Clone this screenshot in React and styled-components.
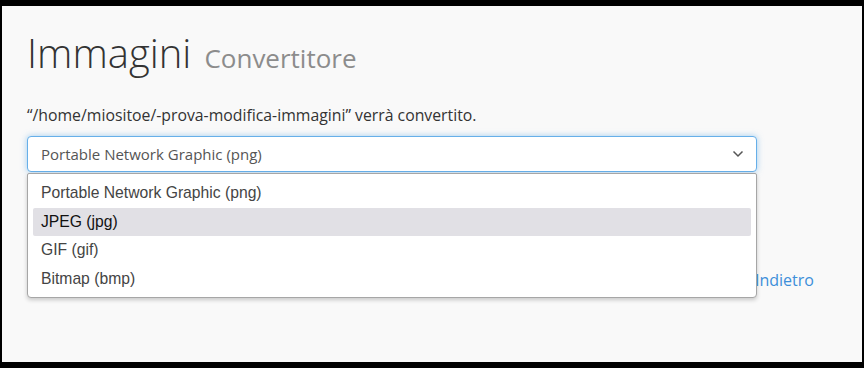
import styled, { createGlobalStyle } from 'styled-components'

const GlobalStyle = createGlobalStyle`
  html, body {
    margin: 0;
    padding: 0;
    background: #000;
  }
  body {
    font-family: 'Open Sans', 'Liberation Sans', sans-serif;
    color: #333;
  }
`

const Frame = styled.div`
  background: #f9f9f9;
  height: 356px;
  margin: 6px 2px;
  padding: 0 25px;
  box-sizing: border-box;
  overflow: hidden;
`

const Title = styled.h1`
  margin: 0;
  padding-top: 20px;
  font-size: 40px;
  font-weight: 300;
  line-height: 54px;
  color: #333;
`

const SubTitle = styled.small`
  font-size: 26px;
  font-weight: 400;
  color: #8c8c8c;
  margin-left: 13px;
`

const Notice = styled.p`
  margin: 19px 0 10px;
  font-size: 15.8px;
  line-height: 22px;
`

const SelectWrap = styled.div`
  position: relative;
  width: 730px;
`

const SelectBox = styled.div`
  display: flex;
  align-items: center;
  justify-content: space-between;
  height: 36px;
  padding: 0 12px 0 13px;
  box-sizing: border-box;
  background: #fff;
  border: 1px solid #66afe9;
  border-radius: 4px;
  box-shadow: 0 0 6px rgba(102, 175, 233, 0.6);
  font-size: 15px;
  color: #555;
`

const Chevron = () => (
  <svg width='12' height='8' viewBox='0 0 12 8'>
    <path d='M1.5 1.5 L6 6 L10.5 1.5' fill='none' stroke='#555' strokeWidth='1.5' />
  </svg>
)

const Menu = styled.ul`
  position: absolute;
  top: 37px;
  left: 0;
  right: 0;
  z-index: 2;
  margin: 0;
  padding: 5px 5px 4px;
  list-style: none;
  background: #fff;
  border: 1px solid #a6a6a6;
  border-radius: 2px 2px 4px 4px;
  box-shadow: 0 2px 4px rgba(0, 0, 0, 0.2);
`

const Option = styled.li`
  height: 28.5px;
  line-height: 28.5px;
  padding: 0 8px;
  border-radius: 2px;
  font-family: 'Liberation Sans', Arial, sans-serif;
  font-size: 15.7px;
  color: ${props => props.active ? '#111' : '#444'};
  background: ${props => props.active ? '#e1e0e5' : 'transparent'};
`

const Actions = styled.div`
  display: grid;
  grid-template-columns: 728px auto;
  align-items: center;
  margin-top: 97px;
`

const BackLink = styled.a`
  color: #3d8fd9;
  font-size: 16px;
  text-decoration: none;
`

const options = [
  'Portable Network Graphic (png)',
  'JPEG (jpg)',
  'GIF (gif)',
  'Bitmap (bmp)'
]

const App = () => (
  <>
    <GlobalStyle />
    <Frame>
      <Title>Immagini<SubTitle>Convertitore</SubTitle></Title>
      <Notice>“/home/miositoe/-prova-modifica-immagini” verrà convertito.</Notice>
      <SelectWrap>
        <SelectBox>
          <span>Portable Network Graphic (png)</span>
          <Chevron />
        </SelectBox>
        <Menu>
          {options.map((o, i) => <Option key={o} active={i === 1}>{o}</Option>)}
        </Menu>
      </SelectWrap>
      <Actions>
        <span />
        <BackLink href='#'>Indietro</BackLink>
      </Actions>
    </Frame>
  </>
)

export default App
